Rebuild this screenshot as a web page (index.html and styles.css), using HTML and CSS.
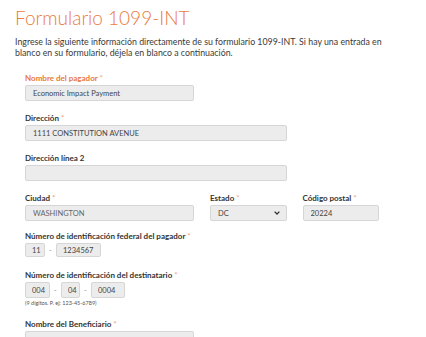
FILE: index.html
```html
<!DOCTYPE html>
<html lang="es">
<head>
    <meta charset="UTF-8">
    <meta name="viewport" content="width=device-width, initial-scale=1.0">
    <title>Formulario 1099-INT</title>
    <link rel="stylesheet" href="styles.css">
</head>
<body>
    <h1 class="titulo">Formulario 1099-INT</h1>
    <p class="intro">Ingrese la siguiente información directamente de su formulario 1099-INT. Si hay una entrada en blanco en su formulario, déjela en blanco a continuación.</p>

    <form class="formulario">
        <div class="row">
            <div class="campo col-2">
                <label class="activo" for="pagador">Nombre del pagador <span class="req">*</span></label>
                <input type="text" id="pagador" value="Economic Impact Payment">
            </div>
        </div>
        <div class="row">
            <div class="campo col-3">
                <label for="direccion">Dirección <span class="req">*</span></label>
                <input type="text" id="direccion" value="1111 CONSTITUTION AVENUE">
            </div>
        </div>
        <div class="row">
            <div class="campo col-3">
                <label for="direccion2">Dirección línea 2</label>
                <input type="text" id="direccion2" value="">
            </div>
        </div>
        <div class="row fila-ciudad">
            <div class="campo col-2">
                <label for="ciudad">Ciudad <span class="req">*</span></label>
                <input type="text" id="ciudad" value="WASHINGTON" class="claro">
            </div>
            <div class="campo">
                <label for="estado">Estado <span class="req">*</span></label>
                <div class="select-wrap">
                    <select id="estado">
                        <option>DC</option>
                    </select>
                    <svg class="chevron" width="6" height="4" viewBox="0 0 6 4"><path d="M0.6 0.6 L3 3 L5.4 0.6" fill="none" stroke="#333" stroke-width="1.3"/></svg>
                </div>
            </div>
            <div class="campo">
                <label for="postal">Código postal <span class="req">*</span></label>
                <input type="text" id="postal" value="20224">
            </div>
        </div>
        <div class="campo campo-ein">
            <label>Número de identificación federal del pagador <span class="req">*</span></label>
            <div class="partes ein">
                <input type="text" class="p-ein1" value="11">
                <span class="guion">-</span>
                <input type="text" class="p-ein2" value="1234567">
            </div>
        </div>
        <div class="campo">
            <label>Número de identificación del destinatario <span class="req">*</span></label>
            <div class="partes">
                <input type="text" class="p-ssn1" value="004">
                <span class="guion">-</span>
                <input type="text" class="p-ssn2" value="04">
                <span class="guion">-</span>
                <input type="text" class="p-ssn3" value="0004">
            </div>
            <div class="ayuda">(9 dígitos. P. ej: 123-45-6789)</div>
        </div>
        <div class="row">
            <div class="campo col-2">
                <label for="beneficiario">Nombre del Beneficiario <span class="req">*</span></label>
                <input type="text" id="beneficiario" value="">
            </div>
        </div>
    </form>
</body>
</html>
```

FILE: styles.css
```css
/* Formulario 1099-INT */
body {
    font-family: Lato, "Open Sans", Arial, sans-serif;
    background-color: #fff;
    color: #333;
    margin: 0;
    padding: 6px 15px 0 15px;
}

.titulo {
    font-size: 19px;
    font-weight: 300;
    line-height: 24px;
    color: #ea7a3e;
    margin: 0;
}

.intro {
    font-size: 8.8px;
    line-height: 10.5px;
    color: #3a3a3a;
    margin: 7px 0 0 0;
    width: 385px;
}

.formulario {
    margin: 14px 0 0 10px;
    width: 354px;
}

.row {
    display: grid;
    grid-template-columns: repeat(4, 1fr);
    column-gap: 16px;
}
.col-2 {
    grid-column: span 2;
}
.col-3 {
    grid-column: span 3;
}

.campo {
    margin-bottom: 11px;
}
.fila-ciudad .campo {
    margin-bottom: 9px;
}
.campo-ein {
    margin-bottom: 12px;
}

label {
    display: block;
    font-size: 8px;
    font-weight: 700;
    line-height: 12px;
    color: #333;
    margin-bottom: 1px;
    white-space: nowrap;
}
label.activo {
    color: #e9773a;
}
.req {
    color: #f2a27a;
    font-weight: 400;
}

input[type="text"],
select {
    display: block;
    box-sizing: border-box;
    width: 100%;
    height: 16px;
    padding: 0 0 0 7px;
    margin: 0;
    font-family: Lato, "Open Sans", Arial, sans-serif;
    font-size: 7.5px;
    color: #444;
    background: #ececec;
    border: 1px solid #d6d6d6;
    border-radius: 2px;
    outline: none;
}
input.claro {
    color: #666;
}

.select-wrap {
    position: relative;
}
select {
    -webkit-appearance: none;
    appearance: none;
}
.chevron {
    position: absolute;
    right: 7px;
    top: 6px;
}

.partes {
    display: flex;
    align-items: center;
    gap: 4px;
}
.partes input[type="text"] {
    padding-left: 6px;
}
.ein input[type="text"] {
    height: 14px;
}
.guion {
    font-size: 7px;
    color: #888;
    width: 3px;
}
.p-ein1 { width: 20px !important; }
.p-ein2 { width: 45px !important; }
.p-ssn1 { width: 25px !important; }
.p-ssn2 { width: 19px !important; }
.p-ssn3 { width: 34px !important; }

.ayuda {
    font-size: 5.5px;
    line-height: 8px;
    color: #555;
    margin-top: 1px;
}
```
